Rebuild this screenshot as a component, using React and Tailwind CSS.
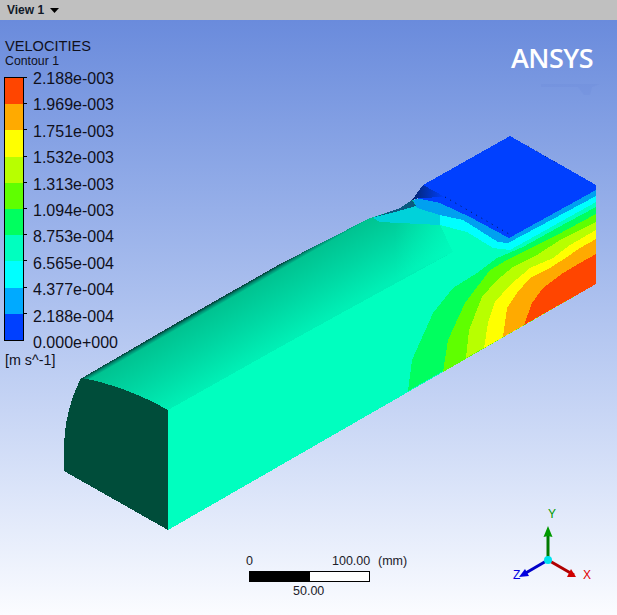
const LEGEND_LABELS = [
  '2.188e-003', '1.969e-003', '1.751e-003', '1.532e-003', '1.313e-003', '1.094e-003',
  '8.753e-004', '6.565e-004', '4.377e-004', '2.188e-004', '0.000e+000',
];

const LEGEND_BANDS = [
  'bg-[#ff4500]', 'bg-[#ffaa00]', 'bg-[#ffff00]', 'bg-[#b8ff00]', 'bg-[#5fff00]',
  'bg-[#00ff5f]', 'bg-[#00ffbf]', 'bg-[#00ffff]', 'bg-[#00aaff]', 'bg-[#0040ff]',
];

// contour fronts on the side wall, each closes along the bottom edge
const CONTOURS = [
  ['#00ff5f', '408,391 412,360 433,313 453,288 477,273 497,258 523,247 557,228 596,207'],
  ['#5fff00', '443,372 448,340 465,303 490,270 507,260 533,247 557,235 596,214'],
  ['#b8ff00', '466,358 469,330 482,297 497,280 513,267 537,255 560,240 596,222'],
  ['#ffff00', '484,348 488,323 495,302 510,285 530,268 553,258 570,245 596,230'],
  ['#ffaa00', '503,337 507,308 517,293 530,278 550,268 567,257 580,248 596,239'],
  ['#ff4500', '524,325 532,303 543,288 563,273 580,263 596,254'],
];

function Scene() {
  return (
    <svg viewBox="0 20 617 595" className="block h-full w-full">
      <defs>
        <linearGradient id="crown" gradientUnits="userSpaceOnUse" x1="82" y1="378" x2="117" y2="439">
          <stop offset="0" stopColor="#04483e" />
          <stop offset="0.03" stopColor="#008a70" />
          <stop offset="0.07" stopColor="#00c391" />
          <stop offset="0.5" stopColor="#00d6a2" />
          <stop offset="1" stopColor="#00efb5" />
        </linearGradient>
        <linearGradient id="crownFade" gradientUnits="userSpaceOnUse" x1="395" y1="240" x2="480" y2="240">
          <stop offset="0" stopColor="#00ffbf" stopOpacity="0" />
          <stop offset="1" stopColor="#00ffbf" stopOpacity="1" />
        </linearGradient>
        <linearGradient id="inlet" gradientUnits="userSpaceOnUse" x1="412" y1="195" x2="445" y2="195">
          <stop offset="0" stopColor="#03246e" />
          <stop offset="1" stopColor="#0040ff" />
        </linearGradient>
      </defs>
      <g shapeRendering="crispEdges">
        <polygon fill="#00ffbf" points="168,410 373,218 596,190 596,284 168,530" />
        {CONTOURS.map(([fill, points]) => (
          <polygon key={fill} fill={fill} points={`${points} 596,284`} />
        ))}
        <polygon
          fill="url(#crown)"
          points="82,378 180,321 280,264 370,218 400,208 412,200 440,225 453,252 347,310 280,347 168,410"
        />
        <polygon fill="url(#crownFade)" points="380,222 440,225 467,232 485,243 453,252 395,282" />
        <polygon fill="#00d2da" points="373,218 400,208 413,205 440,215 440,225 380,222" />
        <polygon fill="#00ffff" points="440,213 440,225 467,232 493,248 510,250 596,202 596,190 470,200" />
        <polygon fill="#00a0f0" points="413,200 417,208 440,215 463,220 498,242 508,243 596,196 596,185 510,180" />
        <polygon fill="#0040ff" points="423,185 510,136 596,185 596,190 509,238 470,217 440,203 415,198 412,200" />
        <polygon fill="url(#inlet)" points="423,185 445,197 418,198 412,200" />
        <polygon fill="#0a5a80" points="375,217 400,208 412,200 416,206 395,212" />
        <path fill="#004d3a" d="M82 378 Q125 386 168 410 L168 530 L64 471 L64 450 Q64 412 81 378 Z" />
      </g>
      <path d="M445 197 L509 234" stroke="#02174a" strokeDasharray="1 5" fill="none" />
      <path d="M528 146 L560 165" stroke="#02174a" strokeDasharray="1 9" fill="none" />
      <path d="M541 84 H600 L592 87 L590 95 L584 95 L578 87 H541 Z" fill="#5577d0" opacity="0.1" />
    </svg>
  );
}

function Triad() {
  return (
    <svg viewBox="0 0 100 90" className="block h-[90px] w-[100px]">
      <path d="M48 60 V35" stroke="#007a00" strokeWidth="3" />
      <polygon points="48,26 52.5,37 48,36 43.5,37" fill="#009a00" />
      <path d="M48 60 L74 75" stroke="#b00000" strokeWidth="3" />
      <polygon points="76,77 67,77 71,69" fill="#d00000" />
      <path d="M48 60 L24 74" stroke="#0000c8" strokeWidth="3" />
      <polygon points="19,77 29,76 25,69" fill="#0000e0" />
      <circle cx="48" cy="60" r="4" fill="#00e4ee" />
    </svg>
  );
}

export default function App() {
  return (
    <div className="flex h-[615px] w-[617px] flex-col overflow-hidden font-['Liberation_Sans',Arial,sans-serif]">
      <div className="flex h-5 items-center gap-[6px] bg-[#c0c0c0] pl-[7px] text-[12px] font-bold text-[#101828]">
        View 1
        <svg width="9" height="5" viewBox="0 0 9 5"><polygon points="0,0 9,0 4.5,5" fill="#000" /></svg>
      </div>

      <div className="relative flex-1 bg-linear-to-b from-[#6a8bdc] to-[#fbfcff]">
        <Scene />

        <div className="absolute left-[4px] top-[18px] text-[#10101c]">
          <div className="pl-px text-[14.6px] leading-[17px]">VELOCITIES</div>
          <div className="pl-px text-[12.3px] leading-[13px]">Contour 1</div>
          <div className="mt-[9px] flex">
            <div className="flex h-[264px] w-5 flex-col border border-black">
              {LEGEND_BANDS.map((band) => (
                <div key={band} className={`relative flex-1 ${band}`}>
                  <div className="absolute -right-[4px] -top-px h-px w-[3px] bg-black" />
                </div>
              ))}
            </div>
            <div className="-mt-[11px] ml-[9px] flex flex-col">
              {LEGEND_LABELS.map((label) => (
                <div key={label} className="h-[26.4px] text-[16px] leading-[26.4px]">{label}</div>
              ))}
            </div>
          </div>
          <div className="mt-[-4px] pl-px text-[14.3px] leading-[17px]">[m s^-1]</div>
        </div>

        <div className="absolute left-[511px] top-[19px] font-['Open_Sans',sans-serif] text-[27px] font-semibold leading-[38px] tracking-[-0.5px] text-white">
          ANSYS
        </div>

        <div className="absolute left-[246px] top-[534px] w-[170px] text-[12.5px] leading-[15px] text-[#202028]">
          <div className="flex">
            <span className="w-[86px]">0</span>
            <span className="w-[46px]">100.00</span>
            <span>(mm)</span>
          </div>
          <div className="ml-[3px] mt-[2px] flex h-[11px] w-[121px] border border-black bg-white">
            <div className="w-[60px] bg-black" />
          </div>
          <div className="ml-[47px] mt-[2px]">50.00</div>
        </div>

        <div className="absolute left-[500px] top-[480px]"><Triad /></div>
        <span className="absolute left-[548px] top-[487px] text-[12px] leading-[14px] text-[#009a00]">Y</span>
        <span className="absolute left-[513px] top-[548px] text-[12px] leading-[14px] text-[#0000e0]">Z</span>
        <span className="absolute left-[583px] top-[548px] text-[12px] leading-[14px] text-[#e00000]">X</span>
      </div>
    </div>
  );
}
